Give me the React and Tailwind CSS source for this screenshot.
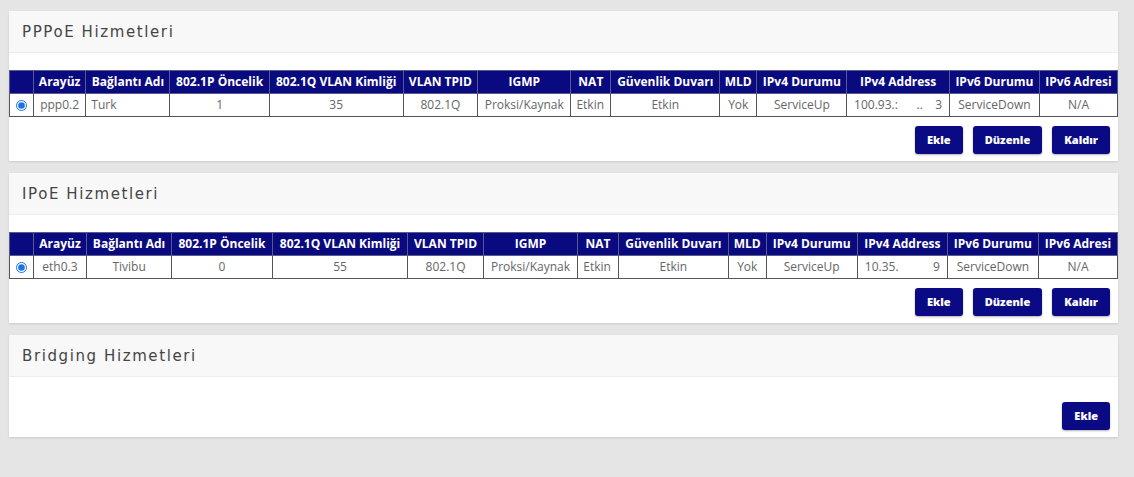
import React from "react";

const headers = ["", "Arayüz", "Bağlantı Adı", "802.1P Öncelik", "802.1Q VLAN Kimliği", "VLAN TPID", "IGMP", "NAT", "Güvenlik Duvarı", "MLD", "IPv4 Durumu", "IPv4 Address", "IPv6 Durumu", "IPv6 Adresi"];

function Btn({ children }) {
  return (
    <button className="h-[28px] px-[12px] rounded-[3px] bg-[#0a0a84] text-white text-[11px] font-extrabold [font-family:'Open_Sans',sans-serif] shadow-[0_1px_2px_rgba(0,0,0,0.3)]">
      {children}
    </button>
  );
}

function Card({ title, children }) {
  return (
    <div className="bg-white shadow-[0_1px_2px_rgba(0,0,0,0.12)]">
      <div className="h-[42px] bg-[#f8f8f8] border-b border-[#ededed] flex items-center px-[13px] pt-[2px]">
        <span className="text-[15px] text-[#454545] tracking-[1.6px] [font-family:'DejaVu_Sans',sans-serif]">{title}</span>
      </div>
      {children}
    </div>
  );
}

function ServiceTable({ row }) {
  return (
    <table className="w-full border-collapse [font-family:'Open_Sans',sans-serif] text-[12px] mt-[17px]">
      <thead>
        <tr className="h-[23px] bg-[#0a0a80]">
          {headers.map((h, i) => (
            <th key={i} className={`text-white font-bold px-[4px] py-0 whitespace-nowrap border border-[#5a5a8a] ${i === 0 ? "w-[24px]" : ""}`}>{h}</th>
          ))}
        </tr>
      </thead>
      <tbody>
        <tr className="h-[23px] text-[#666]">
          <td className="border border-[#555] text-center px-0">
            <input type="radio" checked readOnly className="w-[11px] h-[11px] align-middle accent-[#1a73e8] m-0" />
          </td>
          {row.map((c, i) => (
            <td key={i} className={`border border-[#555] px-[5px] whitespace-pre ${c.left ? "text-left" : "text-center"}`}>{c.t}</td>
          ))}
        </tr>
      </tbody>
    </table>
  );
}

const row1 = [
  { t: "ppp0.2" },
  { t: "Turk", left: true },
  { t: "1" }, { t: "35" }, { t: "802.1Q" }, { t: "Proksi/Kaynak" }, { t: "Etkin", left: true }, { t: "Etkin" }, { t: "Yok" }, { t: "ServiceUp" },
  { t: "100.93.:      ..    3" }, { t: "ServiceDown" }, { t: "N/A" },
];
const row2 = [
  { t: "eth0.3" },
  { t: "Tivibu" },
  { t: "0" }, { t: "55" }, { t: "802.1Q" }, { t: "Proksi/Kaynak" }, { t: "Etkin", left: true }, { t: "Etkin" }, { t: "Yok" }, { t: "ServiceUp" },
  { t: "10.35.           9" }, { t: "ServiceDown" }, { t: "N/A" },
];

export default function App() {
  return (
    <div className="min-h-[477px] bg-[#e5e5e5] pt-[11px] pl-[9px] pr-[16px] pb-[20px] flex flex-col gap-[12px]">
      <Card title="PPPoE Hizmetleri">
        <ServiceTable row={row1} />
        <div className="flex justify-end gap-[10px] pr-[8px] pt-[9px] pb-[7px]">
          <Btn>Ekle</Btn>
          <Btn>Düzenle</Btn>
          <Btn>Kaldır</Btn>
        </div>
      </Card>
      <Card title="IPoE Hizmetleri">
        <ServiceTable row={row2} />
        <div className="flex justify-end gap-[10px] pr-[8px] pt-[9px] pb-[7px]">
          <Btn>Ekle</Btn>
          <Btn>Düzenle</Btn>
          <Btn>Kaldır</Btn>
        </div>
      </Card>
      <Card title="Bridging Hizmetleri">
        <div className="flex justify-end pr-[8px] pt-[25px] pb-[7px]">
          <Btn>Ekle</Btn>
        </div>
      </Card>
    </div>
  );
}
